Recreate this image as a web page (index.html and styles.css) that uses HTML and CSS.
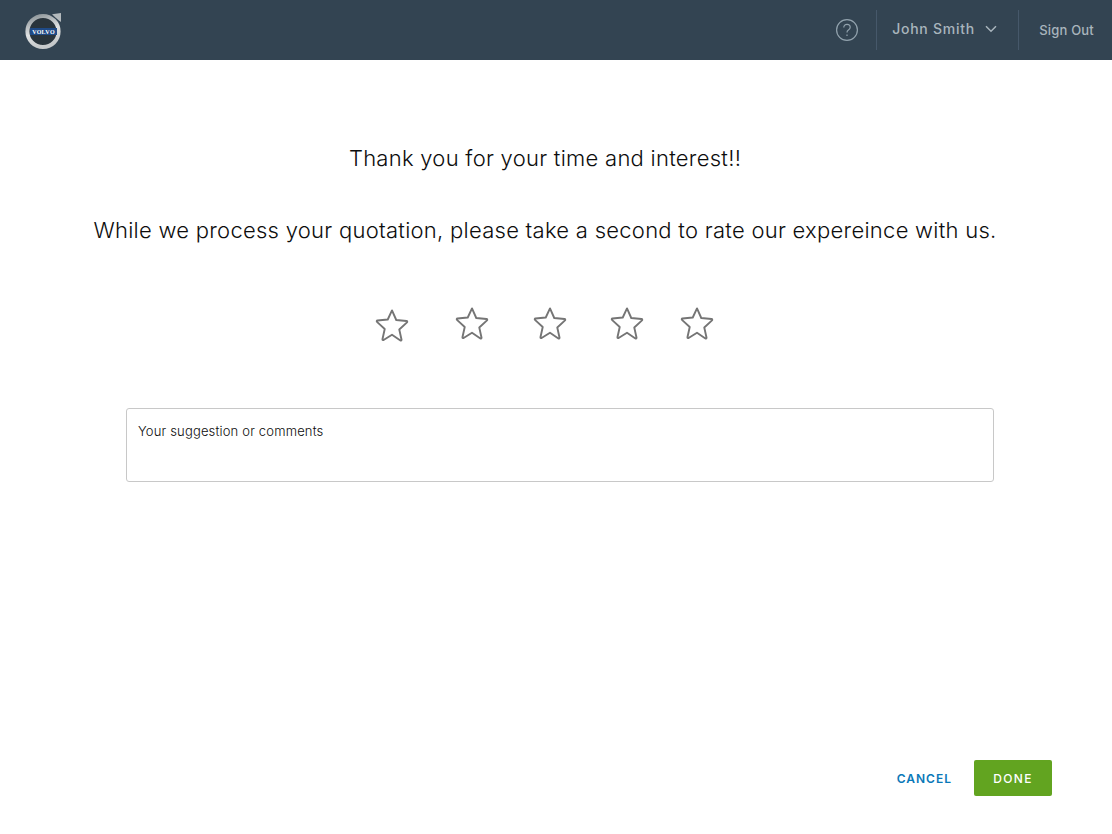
FILE: index.html
```html
<!DOCTYPE html>
<html lang="en">
<head>
    <meta charset="UTF-8">
    <meta name="viewport" content="width=device-width, initial-scale=1.0">
    <title>Rate your experience</title>
    <link rel="stylesheet" href="styles.css">
</head>
<body>

    <header class="topbar">
        <svg class="logo" width="40" height="40" viewBox="0 0 40 40">
            <defs>
                <linearGradient id="ring" x1="0.1" y1="0" x2="0.4" y2="1">
                    <stop offset="0" stop-color="#8d9599"/>
                    <stop offset="0.55" stop-color="#dfe1e2"/>
                    <stop offset="1" stop-color="#c6c9ca"/>
                </linearGradient>
            </defs>
            <path d="M28 3.2l9-1.2v9l-2.4-1.8-3.2-2.6z" fill="#b4babd"/>
            <circle cx="19" cy="20.5" r="15.6" fill="#29343c" stroke="url(#ring)" stroke-width="4"/>
            <rect x="6" y="17" width="27" height="7" fill="#1f4a86"/>
            <text class="logo-text" x="19.5" y="22.6" text-anchor="middle">VOLVO</text>
        </svg>
        <div class="topbar-right">
            <div class="help-item">
                <svg width="24" height="24" viewBox="0 0 24 24" fill="none" stroke="#93a3ae" stroke-width="1.2">
                    <circle cx="12" cy="12" r="10.4"/>
                    <path d="M8.8 9.4c0-1.9 1.4-3.1 3.2-3.1s3.2 1.2 3.2 2.9c0 1.4-.8 2.1-1.8 2.8-.9.6-1.4 1.2-1.4 2.4"/>
                    <path d="M12 16.6v1.4"/>
                </svg>
            </div>
            <div class="user-item">
                <span>John Smith</span>
                <svg width="12" height="8" viewBox="0 0 12 8" fill="none" stroke="#a9b5bd" stroke-width="1.5">
                    <path d="M1 1.2l5 5 5-5"/>
                </svg>
            </div>
            <div class="signout-item">Sign Out</div>
        </div>
    </header>

    <main class="content">
        <h1 class="thanks">Thank you for your time and interest!!</h1>
        <p class="prompt">While we process your quotation, please take a second to rate our expereince with us.</p>

        <div class="stars">
            <svg class="star star-1" viewBox="0 0 36 36"><path d="M18 2.5l4.5 10.2 10.9 1.1c.8.1 1 .9.5 1.4l-8.2 7.5 2.4 10.9c.1.7-.6 1.2-1.2.8L18 28.3l-8.9 5.6c-.6.4-1.3-.1-1.2-.8l2.4-10.9-8.2-7.5c-.5-.5-.3-1.3.5-1.4l10.9-1.1z"/></svg>
            <svg class="star star-2" viewBox="0 0 36 36"><path d="M18 2.5l4.5 10.2 10.9 1.1c.8.1 1 .9.5 1.4l-8.2 7.5 2.4 10.9c.1.7-.6 1.2-1.2.8L18 28.3l-8.9 5.6c-.6.4-1.3-.1-1.2-.8l2.4-10.9-8.2-7.5c-.5-.5-.3-1.3.5-1.4l10.9-1.1z"/></svg>
            <svg class="star star-3" viewBox="0 0 36 36"><path d="M18 2.5l4.5 10.2 10.9 1.1c.8.1 1 .9.5 1.4l-8.2 7.5 2.4 10.9c.1.7-.6 1.2-1.2.8L18 28.3l-8.9 5.6c-.6.4-1.3-.1-1.2-.8l2.4-10.9-8.2-7.5c-.5-.5-.3-1.3.5-1.4l10.9-1.1z"/></svg>
            <svg class="star star-4" viewBox="0 0 36 36"><path d="M18 2.5l4.5 10.2 10.9 1.1c.8.1 1 .9.5 1.4l-8.2 7.5 2.4 10.9c.1.7-.6 1.2-1.2.8L18 28.3l-8.9 5.6c-.6.4-1.3-.1-1.2-.8l2.4-10.9-8.2-7.5c-.5-.5-.3-1.3.5-1.4l10.9-1.1z"/></svg>
            <svg class="star star-5" viewBox="0 0 36 36"><path d="M18 2.5l4.5 10.2 10.9 1.1c.8.1 1 .9.5 1.4l-8.2 7.5 2.4 10.9c.1.7-.6 1.2-1.2.8L18 28.3l-8.9 5.6c-.6.4-1.3-.1-1.2-.8l2.4-10.9-8.2-7.5c-.5-.5-.3-1.3.5-1.4l10.9-1.1z"/></svg>
        </div>

        <div class="comments">Your suggestion or comments</div>

        <div class="actions">
            <button class="btn-cancel">CANCEL</button>
            <button class="btn-done">DONE</button>
        </div>
    </main>

</body>
</html>
```

FILE: styles.css
```css
* {
    box-sizing: border-box;
}

body {
    font-family: Inter, "Open Sans", sans-serif;
    margin: 0;
    padding: 0;
    background-color: #fff;
    color: #0d0d0d;
}

.topbar {
    display: flex;
    align-items: center;
    justify-content: space-between;
    height: 60px;
    padding-left: 24px;
    background-color: #334452;
}

.logo {
    margin-top: 1px;
}

.logo-text {
    font-family: "Liberation Serif", serif;
    font-size: 6px;
    font-weight: bold;
    letter-spacing: 0.3px;
    fill: #fff;
}

.topbar-right {
    display: flex;
    align-items: center;
    height: 40px;
    margin-top: -1px;
    font-size: 14px;
    font-weight: 500;
    color: #a9b5bd;
}

.help-item {
    display: flex;
    align-items: center;
    height: 40px;
    padding-right: 17px;
    border-right: 1px solid #46586a;
}

.user-item {
    display: flex;
    align-items: center;
    gap: 10px;
    height: 40px;
    width: 142px;
    padding: 0 0 2px 15px;
    border-right: 1px solid #46586a;
    letter-spacing: 0.75px;
}

.signout-item {
    padding: 1px 18px 0 20px;
    font-size: 13px;
    letter-spacing: 0.2px;
}

.content {
    display: flex;
    flex-direction: column;
    height: 774px;
    padding: 85px 60px 38px 60px;
}

.thanks {
    margin: 0;
    font-size: 22px;
    font-weight: 300;
    letter-spacing: 0.27px;
    line-height: 26px;
    text-align: center;
    padding-right: 22px;
}

.prompt {
    margin: 46px 0 0 0;
    font-size: 22px;
    font-weight: 300;
    letter-spacing: 0.27px;
    line-height: 26px;
    text-align: center;
    white-space: nowrap;
    padding-right: 22px;
}

.stars {
    display: flex;
    margin: 63px 0 0 315px;
}

.star {
    width: 34px;
    height: 34px;
    fill: none;
    stroke: #757575;
    stroke-width: 2;
    stroke-linejoin: round;
    align-self: flex-start;
}

.star-1 {
    margin-top: 2px;
}

.star-2 {
    margin-left: 46px;
}

.star-3 {
    margin-left: 44px;
}

.star-4 {
    margin-left: 43px;
}

.star-5 {
    margin-left: 36px;
}

.comments {
    width: 868px;
    height: 74px;
    margin: 66px 0 0 66px;
    padding: 14px 11px;
    border: 1px solid #c8c8c8;
    border-radius: 3px;
    font-size: 13px;
    font-weight: 300;
    letter-spacing: 0.17px;
    line-height: 16px;
}

.actions {
    display: flex;
    align-items: center;
    justify-content: flex-end;
    gap: 22px;
    margin-top: auto;
}

.btn-cancel {
    padding: 0;
    border: none;
    background: none;
    color: #0a78b8;
    font-family: inherit;
    font-size: 12px;
    font-weight: 600;
    letter-spacing: 1px;
    cursor: pointer;
}

.btn-done {
    width: 78px;
    height: 36px;
    border: none;
    border-radius: 2px;
    background-color: #62a420;
    color: #fff;
    font-family: inherit;
    font-size: 12px;
    font-weight: 500;
    letter-spacing: 1.3px;
    cursor: pointer;
}
```
